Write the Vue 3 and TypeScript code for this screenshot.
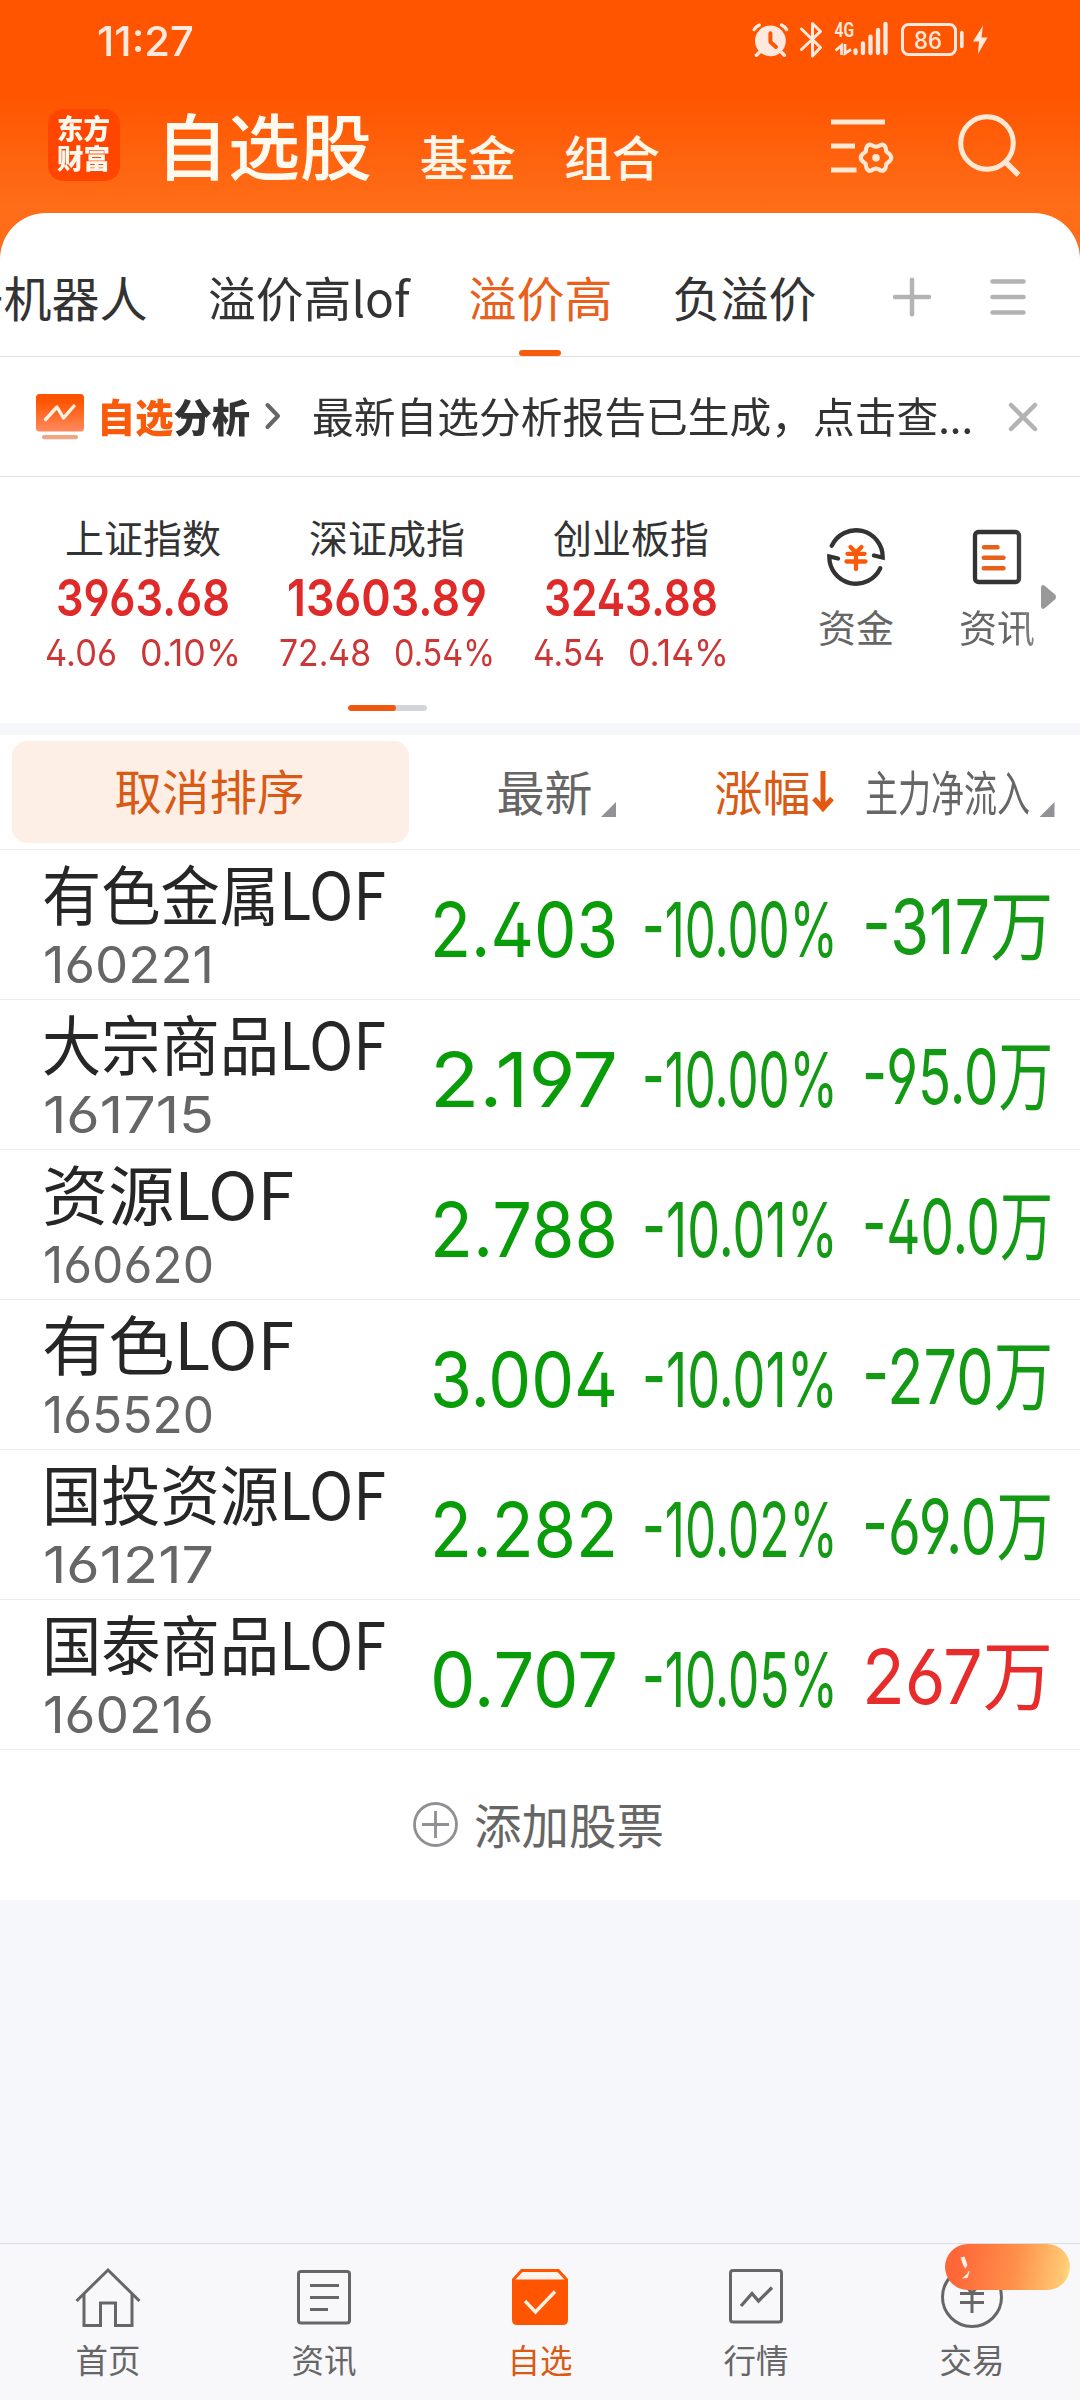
<script setup lang="ts">
import type { Directive } from 'vue'

interface IndexQuote { name: string; value: string; width: number; change: string; changeW: number; pct: string; pctW: number }
interface Fund { name: string; nameW: number; code: string; price: string; pct: string; flow: string; up?: boolean }

// Squeezes or stretches a label horizontally so that it fills its column width.
const vFit: Directive<HTMLElement, number> = {
  mounted(el, { value }) {
    const natural = el.getBoundingClientRect().width
    el.style.transform = `scaleX(${value / natural})`
    el.style.marginRight = `${value - natural}px`
  },
}

const indexes: IndexQuote[] = [
  { name: '上证指数', value: '3963.68', width: 174, change: '4.06', changeW: 72, pct: '0.10%', pctW: 101 },
  { name: '深证成指', value: '13603.89', width: 200, change: '72.48', changeW: 92, pct: '0.54%', pctW: 101 },
  { name: '创业板指', value: '3243.88', width: 174, change: '4.54', changeW: 72, pct: '0.14%', pctW: 101 },
]

const funds: Fund[] = [
  { name: '有色金属LOF', nameW: 344, code: '160221', price: '2.403', pct: '-10.00%', flow: '-317万' },
  { name: '大宗商品LOF', nameW: 344, code: '161715', price: '2.197', pct: '-10.00%', flow: '-95.0万' },
  { name: '资源LOF', nameW: 252, code: '160620', price: '2.788', pct: '-10.01%', flow: '-40.0万' },
  { name: '有色LOF', nameW: 252, code: '165520', price: '3.004', pct: '-10.01%', flow: '-270万' },
  { name: '国投资源LOF', nameW: 344, code: '161217', price: '2.282', pct: '-10.02%', flow: '-69.0万' },
  { name: '国泰商品LOF', nameW: 344, code: '160216', price: '0.707', pct: '-10.05%', flow: '267万', up: true },
]
</script>

<template>
  <div class="screen">
    <header class="top">
      <div class="status">
        <span v-fit="97" class="num time">11:27</span>
        <svg class="sys" width="250" height="60" viewBox="750 10 250 60" fill="none" stroke="#ffe9de">
          <g transform="translate(770.4 40.8)">
            <circle r="15.4" fill="#ffe9de" stroke="none" />
            <path d="M-10.5 11l-3.5 3.5M10.5 11l3.5 3.5" stroke-width="3.4" stroke-linecap="round" />
            <path d="M-16.3-11.2q1.8-3 5.2-4.6M16.3-11.2q-1.8-3-5.2-4.6" stroke-width="3.2" stroke-linecap="round" />
            <path d="M0-7.5V1.2l5.6 5" stroke="#ff5500" stroke-width="4" stroke-linecap="round" stroke-linejoin="round" />
          </g>
          <path d="M801.500 29L820.500 47.500L812.500 56V23.500L820.500 31.500L801.500 49.500" stroke-width="3" stroke-linejoin="round" stroke-linecap="round" />
          <path d="M855.500 50.500V53M863 43.500V53M870.500 36.700V53M878 30V53M885.500 24V53" stroke-width="4.300" stroke-linecap="round" />
          <path d="M841.500 55V45.500L835.500 50.500M845 44V53.500L851 49.500" stroke-width="2.800" />
          <rect x="902.500" y="24.500" width="53" height="30" rx="6" stroke-width="3" />
          <path d="M961.800 32.500V46.500" stroke-width="3.600" stroke-linecap="round" />
          <path d="M983 25.500L973 41.500H979L978 54L987.500 37.500H981.500Z" fill="#ffe9de" stroke="none" />
          <text x="834.500" y="36.500" class="net" textLength="19.500" lengthAdjust="spacingAndGlyphs">4G</text>
          <text x="914" y="48.700" class="bat" textLength="28" lengthAdjust="spacingAndGlyphs">86</text>
        </svg>
      </div>
      <div class="titlebar">
        <div class="logo"><span v-fit="53">东方</span><span v-fit="53">财富</span></div>
        <h1>自选股</h1>
        <span class="sect">基金</span>
        <span class="sect">组合</span>
        <svg class="tools" width="200" height="80" viewBox="828 104 200 80" fill="none" stroke="#ffe8d4" stroke-width="5">
          <path d="M831 121H885M831 145H855M831 169H856.500" />
          <path d="M893.00 156.70L892.28 159.05L890.66 160.93L888.77 162.35L887.40 163.65L887.14 165.43L886.69 167.76L885.40 170.15L883.40 171.29L881.00 170.76L878.50 169.50L876.00 168.80L873.50 169.50L871.00 170.76L868.60 171.29L866.60 170.15L865.31 167.76L864.86 165.43L864.60 163.65L863.23 162.35L861.34 160.93L859.72 159.05L859.00 156.70L859.72 154.35L861.34 152.47L863.23 151.05L864.60 149.75L864.86 147.97L865.31 145.64L866.60 143.25L868.60 142.11L871.00 142.64L873.50 143.90L876.00 144.60L878.50 143.90L881.00 142.64L883.40 142.11L885.40 143.25L886.69 145.64L887.14 147.97L887.40 149.75L888.77 151.05L890.66 152.47L892.28 154.35Z" stroke-width="4.600" stroke-linejoin="round" transform="translate(876 156.700) scale(.9) translate(-876 -156.700)" />
          <circle cx="876" cy="156.700" r="3.800" fill="#ffe8d4" stroke="none" />
          <circle cx="987" cy="142" r="26.300" />
          <path d="M1005.500 161L1018.500 174" stroke-width="5.500" />
        </svg>
      </div>
    </header>

    <main class="sheet">
      <nav class="tabs">
        <span class="tab t1">开机器人</span>
        <span class="tab t2"><span v-fit="201.5" class="fit">溢价高lof</span></span>
        <span class="tab t3 on">溢价高</span>
        <span class="tab t4">负溢价</span>
        <svg width="140" height="50" viewBox="890 271.300 140 50" fill="none" stroke="#b3b3b3" stroke-width="4.500" stroke-linecap="round">
          <path d="M895 296.300H929M912 279V313.500M992.500 280.700H1023.500M992.500 296.300H1023.500M992.500 311.700H1023.500" />
        </svg>
      </nav>

      <section class="notice">
        <svg width="48" height="46" viewBox="0 0 48 46" fill="none">
          <defs><linearGradient id="na" x2="0" y2="1"><stop offset=".2" stop-color="#ff5500" /><stop offset="1" stop-color="#ff8a5e" /></linearGradient></defs>
          <rect width="48" height="37.500" rx="3.500" fill="url(#na)" />
          <path d="M9.500 25.500L21 13L27.500 24L38 12" stroke="#fff3e6" stroke-width="3.400" stroke-linecap="round" stroke-linejoin="round" />
          <rect x="6" y="41" width="36" height="4.300" rx="2" fill="#f0a583" />
        </svg>
        <b><span v-fit="153" class="fit"><i>自选</i>分析</span></b>
        <svg class="chev" width="18" height="30" viewBox="0 0 18 30" fill="none" stroke="#666" stroke-width="4" stroke-linecap="round" stroke-linejoin="round"><path d="M3.500 4L14 15L3.500 26" /></svg>
        <p v-fit="661">最新自选分析报告已生成，点击查...</p>
        <svg class="close" width="30" height="30" viewBox="0 0 30 30" stroke="#b3b3b3" stroke-width="4.500" stroke-linecap="round"><path d="M3 3L27 27M27 3L3 27" /></svg>
      </section>

      <section class="market">
        <div v-for="q in indexes" :key="q.name" class="index">
          <span class="iname">{{ q.name }}</span>
          <span class="num ival"><span v-fit="q.width" class="fit">{{ q.value }}</span></span>
          <span class="num isub"><span v-fit="q.changeW" class="fit">{{ q.change }}</span><span v-fit="q.pctW" class="fit">{{ q.pct }}</span></span>
        </div>
        <div class="quick q1">
          <svg width="60" height="60" viewBox="-30 -30 60 60" fill="none" stroke="#333" stroke-width="4.300" stroke-linecap="round">
            <path d="M-24.200-11.300A26.700 26.700 0 0 1 26.700 0.500L18-1.500" />
            <path d="M24.200 11.300A26.700 26.700 0 0 1-26.700-0.500L-18 1.500" />
            <path d="M-5.500-10L0-4.500L5.500-10M-8.500-3.200H8.500M-9.500 4.500H9.500M0-4V12" stroke="#f95908" />
          </svg>
          <span>资金</span>
        </div>
        <div class="quick q2">
          <svg width="60" height="60" viewBox="-30 -30 60 60" fill="none" stroke="#333" stroke-width="4.300" stroke-linecap="round">
            <rect x="-22" y="-25" width="44" height="50" rx="3.500" />
            <path d="M-13-9.700H0.500M-13.200 .7H6.500M-13.200 11.200H6.500" stroke="#e8611a" stroke-width="4.500" />
          </svg>
          <span>资讯</span>
        </div>
        <svg class="more" width="15" height="24" viewBox="0 0 15 24"><path d="M0 3Q0-1.500 4 1L14 9.500Q16 12 14 14.500L4 23Q0 25.500 0 21Z" fill="#999" /></svg>
        <div class="pager"><i></i></div>
      </section>

      <section class="list">
        <div class="cols">
          <button>取消排序</button>
          <span class="c latest">最新<i></i></span>
          <span class="c rise">涨幅<svg width="22" height="42" viewBox="0 0 22 42" fill="none" stroke="#e5580f" stroke-width="5"><path d="M11 0V38M2 27.500L11 37.500L20 27.500" /></svg></span>
          <span class="c inflow"><span v-fit="165" class="fit">主力净流入</span><i></i></span>
        </div>
        <div v-for="f in funds" :key="f.code" class="fund">
          <div class="who">
            <span v-fit="f.nameW" class="fname">{{ f.name }}</span>
            <span v-fit="171" class="num fcode">{{ f.code }}</span>
          </div>
          <span class="num cell price"><span v-fit="188" class="fit">{{ f.price }}</span></span>
          <span class="num cell pct"><span v-fit="196" class="fit">{{ f.pct }}</span></span>
          <span class="num cell flow" :class="{ up: f.up }"><span v-fit="191" class="fit">{{ f.flow }}</span></span>
        </div>
        <div class="add">
          <svg width="45" height="45" viewBox="0 0 45 45" fill="none" stroke="#8f8f94" stroke-width="2.800"><circle cx="22.500" cy="22.500" r="21" /><path d="M9 22.500H36M22.500 9V36" /></svg>
          <span>添加股票</span>
        </div>
      </section>
    </main>

    <footer class="bar">
      <div class="item">
        <svg width="70" height="64" viewBox="-35 -32 70 64"><path d="M-31.500 4L0-27L31.500 4M-24-3V28.500H-7.500V6H7.500V28.500H24V-3" /></svg>
        <span>首页</span>
      </div>
      <div class="item">
        <svg width="70" height="64" viewBox="-35 -32 70 64"><rect x="-25.500" y="-25.500" width="51" height="51.500" rx="2.500" /><path d="M-14-11.500H15M-14 .5H15M-14 12.500H4" /></svg>
        <span>资讯</span>
      </div>
      <div class="item sel">
        <svg width="70" height="64" viewBox="-35 -32 70 64"><path d="M-28-18L-19-28H19L28-18V23Q28 28 23 28H-23Q-28 28-28 23Z" fill="#ff5500" stroke="none" /><path d="M-24.500-17.500L-17.500-25H17.500L24.500-17.500Z" fill="#fff4ec" stroke="none" /><path d="M-15 4L-4.500 15L15-5.500" stroke="#fff0e4" stroke-width="3.300" /></svg>
        <span>自选</span>
      </div>
      <div class="item">
        <svg width="70" height="64" viewBox="-35 -32 70 64"><rect x="-25.500" y="-26.500" width="51" height="51.500" rx="2.500" /><path d="M-15 9L-4-3.500L2.500 4L16-9.500" stroke-width="3.300" /></svg>
        <span>行情</span>
      </div>
      <div class="item">
        <svg width="70" height="64" viewBox="-35 -32 70 64"><circle cy="0" r="29.500" /><path d="M-8-13L0-4L8-13M-12-3.500H12M-12 5.500H12M0-4V16" /></svg>
        <span>交易</span>
        <div class="promo">
          <svg width="125" height="46" viewBox="0 0 125 46"><path d="M15.500 13.500L19.500 12.500L22.500 21L20.500 24.500L18.500 22ZM24 26.500L24.500 28L22.500 34L17 34.500L22 30Z" fill="#fff1e6" /></svg>
        </div>
      </div>
    </footer>
  </div>
</template>

<style>
body { margin: 0; }
</style>

<style scoped>
* { box-sizing: border-box; }
.screen {
  width: 1080px; height: 2400px; overflow: hidden; position: relative;
  display: flex; flex-direction: column; background: #f5f7fa; color: #333;
  font-family: "Noto Sans CJK SC", sans-serif; white-space: nowrap; line-height: 1;
}
svg { display: block; flex: none; }
i { font-style: normal; }
.num { font-family: Inter, "Noto Sans CJK SC", sans-serif; font-feature-settings: "cv02", "cv03", "cv04"; }
.fit, .time, .fname, .fcode, .logo span, .notice p { display: inline-block; transform-origin: 0 50%; flex: none; }

.top { height: 259px; flex: none; background: linear-gradient(#ff5500 0, #ff5500 95px, #ff6d18 205px, #ff6d18 100%); }
.status { height: 82px; display: flex; align-items: center; justify-content: space-between; padding: 0 80px 0 97px; }
.time { font-size: 41px; font-weight: 500; color: #ffe9de; }
.sys { margin-top: -3px; }
.net { font: 600 20px Roboto, sans-serif; fill: #ffe9de; stroke: none; }
.bat { font: 500 24px Inter, sans-serif; fill: #ffe9de; stroke: none; }
.titlebar { height: 126px; display: flex; align-items: center; padding: 0 52px 0 48px; }
.logo {
  width: 72px; height: 72px; border-radius: 15px; background: #ff4600; color: #fff8ee;
  font-size: 27px; font-weight: 900; line-height: 30px; padding: 4px 0 0 9px; display: flex; flex-direction: column; align-items: flex-start;
}
.titlebar h1 { margin: 0 0 0 36px; width: 264px; font-size: 72px; line-height: 72px; font-weight: 500; color: #fffaf0; padding-bottom: 5px; }
.sect { width: 144px; font-size: 48px; font-weight: 500; line-height: 48px; color: #fff6ea; padding-top: 20px; box-sizing: content-box; }
.tools { margin: 0 0 0 auto; }

.sheet { margin-top: -46px; border-radius: 46px 46px 0 0; background: #fff; overflow: hidden; flex: none; }
.tabs { height: 144px; border-bottom: 1px solid #e2e2e2; display: flex; align-items: center; padding-top: 24px; font-size: 48px; }
.tab { height: 120px; line-height: 119px; flex: none; }
.t1 { margin-left: -44.500px; width: 252.500px; }
.t2 { width: 260.500px; }
.t3 { width: 204px; }
.t4 { width: 217.500px; }
.on { color: #e8601c; position: relative; }
.on::after { content: ""; position: absolute; left: 50.500px; bottom: 1px; width: 42px; height: 6px; border-radius: 3px; background: #f75b0c; }
.notice { height: 120px; border-bottom: 1px solid #e2e2e2; display: flex; align-items: center; padding: 0 42px 0 36px; }
.notice b { font-size: 39px; font-weight: 900; margin-left: 13px; width: 167px; padding-bottom: 3px; }
.notice b i { color: #f95b0a; }
.chev { margin-bottom: 2px; }
.notice p { margin: 0 0 2px 30px; font-size: 41.500px; transform-origin: 0 50%; }
.close { margin-left: auto; }

.market { height: 246px; position: relative; display: flex; padding-left: 21px; padding-top: 36px; }
.index { width: 244px; display: flex; flex-direction: column; align-items: center; flex: none; }
.iname { font-size: 39px; height: 50px; line-height: 46px; }
.ival { font-size: 51px; font-weight: 600; color: #e02a2a; height: 70px; line-height: 70px; }
.isub { font-size: 36.500px; color: #cb3636; height: 40px; line-height: 40px; display: flex; gap: 23px; }
.quick { display: flex; flex-direction: column; align-items: center; width: 142px; flex: none; font-size: 38px; color: #666; padding-top: 14px; }
.quick span { margin-top: 20px; }
.q1 { margin-left: 32px; }
.q2 { margin-left: -1px; -webkit-mask-image: linear-gradient(90deg, #000 62%, rgba(0, 0, 0, .4) 100%); mask-image: linear-gradient(90deg, #000 62%, rgba(0, 0, 0, .4) 100%); }
.more { position: absolute; left: 1041px; top: 108px; }
.pager { position: absolute; left: 347.500px; top: 228px; width: 79px; height: 6px; border-radius: 3px; background: #d2d6db; overflow: hidden; }
.pager i { display: block; width: 48px; height: 6px; border-radius: 3px; background: #f0580f; }

.list { border-top: 12px solid #f5f7fa; }
.cols { height: 115px; border-bottom: 1px solid #ececec; display: flex; align-items: center; padding-left: 12px; font-size: 48px; color: #666; }
.cols button { width: 397px; height: 102px; border: 0; border-radius: 15px; background: #fdeee6; color: #d95a14; font: 47.500px "Noto Sans CJK SC", sans-serif; line-height: 95px; padding: 0 2px 6px 0; }
.c { display: flex; align-items: center; height: 102px; line-height: 95px; padding-bottom: 4px; flex: none; }
.c i { width: 15px; height: 15px; margin-top: 39px; background: #929296; clip-path: polygon(100% 0, 100% 100%, 0 100%); }
.latest { margin-left: 87.500px; width: 218px; }
.latest i { margin-left: 8.500px; }
.rise { width: 150px; color: #d95a14; }
.rise svg { margin-left: 1px; margin-top: 3px; }
.inflow i { margin-left: 10px; }
.fund { height: 150px; border-bottom: 1px solid #ececec; display: flex; padding-left: 43px; }
.who { width: 387px; flex: none; display: flex; flex-direction: column; align-items: flex-start; }
.fname { font-size: 65px; line-height: 84px; height: 84px; color: #262626; margin-left: -1px; }
.fcode { font-size: 51px; line-height: 62px; height: 62px; color: #666; }
.cell { font-size: 76px; line-height: 159px; height: 149px; color: #089c08; flex: none; }
.price { width: 212px; }
.pct { width: 220px; color: #149914; }
.flow { line-height: 152px; color: #149914; }
.flow.up { color: #e82c2c; }
.add { height: 150px; display: flex; align-items: center; justify-content: center; gap: 16px; font-size: 47.500px; color: #666; padding: 0 3px 2px 0; }
.add span { padding-bottom: 1px; }

.bar { margin-top: auto; height: 157px; flex: none; border-top: 1px solid #dedee0; background: #f8f8fb; display: flex; }
.item { width: 216px; position: relative; display: flex; flex-direction: column; align-items: center; padding-top: 21px; font-size: 32.500px; color: #666; }
.item > svg { fill: none; stroke: #666; stroke-width: 3; margin-left: -1px; }
.item > span { margin-top: 14px; }
.sel { color: #d95a14; }
.promo { position: absolute; left: 81px; top: 0; width: 125px; height: 46px; border-radius: 23px; background: linear-gradient(100deg, #ff6638 10%, #ff8f4a 55%, #ffc873 92%, #ffe08c); }
</style>
